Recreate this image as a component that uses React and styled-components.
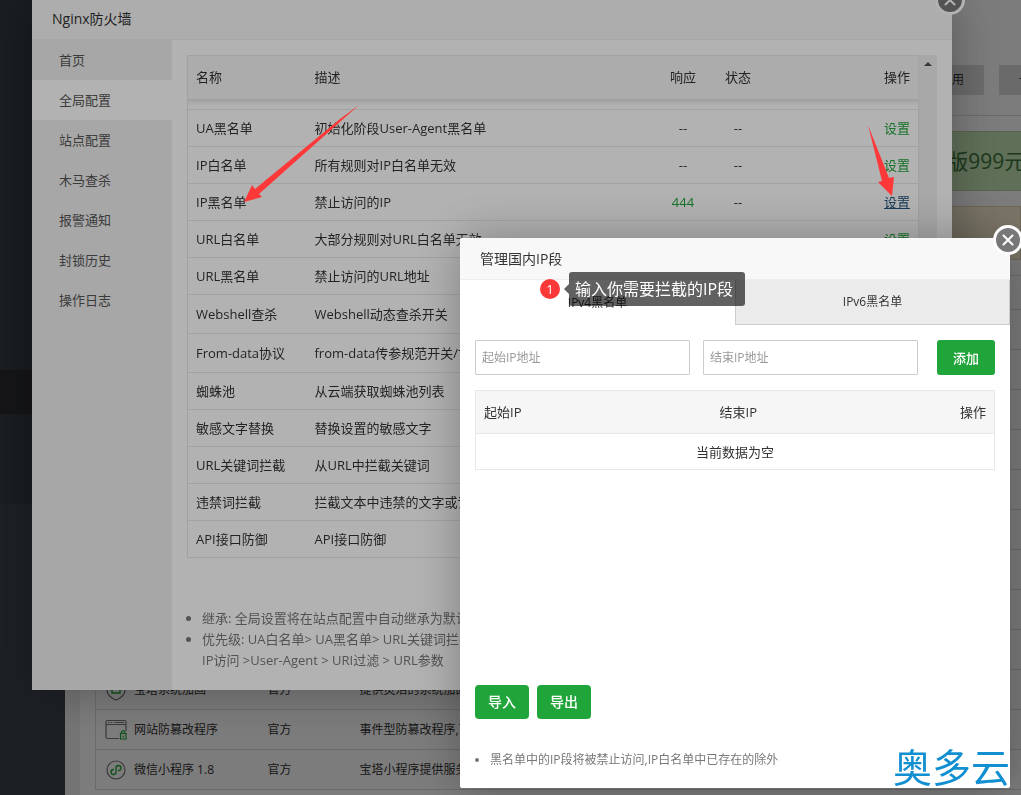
import React from 'react';
import styled, { createGlobalStyle, css } from 'styled-components';

const menu = ['首页', '全局配置', '站点配置', '木马查杀', '报警通知', '封锁历史', '操作日志'];

const rules = [
	{ name: 'UA黑名单', desc: '初始化阶段User-Agent黑名单', code: '--' },
	{ name: 'IP白名单', desc: '所有规则对IP白名单无效', code: '--' },
	{ name: 'IP黑名单', desc: '禁止访问的IP', code: '444', hovered: true },
	{ name: 'URL白名单', desc: '大部分规则对URL白名单无效', code: '--' },
	{ name: 'URL黑名单', desc: '禁止访问的URL地址', code: '444' },
	{ name: 'Webshell查杀', desc: 'Webshell动态查杀开关', code: '--', tall: true },
	{ name: 'From-data协议', desc: 'from-data传参规范开关/协议', code: '--', tall: true },
	{ name: '蜘蛛池', desc: '从云端获取蜘蛛池列表', code: '--' },
	{ name: '敏感文字替换', desc: '替换设置的敏感文字', code: '--' },
	{ name: 'URL关键词拦截', desc: '从URL中拦截关键词', code: '444' },
	{ name: '违禁词拦截', desc: '拦截文本中违禁的文字或词语', code: '444' },
	{ name: 'API接口防御', desc: 'API接口防御', code: '444' }
];

const ShieldIcon = () => (
	<svg width="22" height="22" viewBox="0 0 22 22" fill="none">
		<path d="M11 1C8 3 5 4 2 4v7c0 5 4 8 9 10 5-2 9-5 9-10V4c-3 0-6-1-9-3z" stroke="#777" strokeWidth="1.3" />
		<path d="M7 8h8v6H7z" stroke="#20a53a" strokeWidth="1.5" />
	</svg>
);

const TamperIcon = () => (
	<svg width="22" height="22" viewBox="0 0 22 22" fill="none">
		<path
			d="M14 19.500H2.500A1.500 1.500 0 0 1 1 18V3a1.500 1.500 0 0 1 1.500-1.500h17A1.500 1.500 0 0 1 21 3v9M1 5.500h20"
			stroke="#777"
			strokeWidth="1.2"
		/>
		<path d="M3 3.500h6" stroke="#777" strokeDasharray="1.5 1" />
		<path d="M10 3.500h9" stroke="#777" />
		<path
			d="M15.500 14.500h5.500V20h-5.500zM16.500 14.500v-1a1.700 1.700 0 0 1 3.400 0v1M18.200 16.500v2"
			stroke="#20a53a"
			strokeWidth="1.2"
		/>
	</svg>
);

const MiniAppIcon = () => (
	<svg width="22" height="22" viewBox="0 0 22 22" fill="none">
		<circle cx="11" cy="11" r="9" stroke="#777" strokeWidth="1.2" />
		<path
			d="M8.500 10.500C6.800 10.500 6 11.600 6 13s1 2.500 2.500 2.500S11 14.500 11 13V9c0-1.500 1-2.500 2.500-2.500S16 7.600 16 9s-.8 2.500-2.500 2.500"
			stroke="#20a53a"
			strokeWidth="1.3"
			strokeLinecap="round"
		/>
	</svg>
);

const plugins = [
	{ name: '宝塔系统加固', desc: '提供灵活的系统加固功能', icon: <ShieldIcon /> },
	{ name: '网站防篡改程序', desc: '事件型防篡改程序,可有效保护网站', icon: <TamperIcon /> },
	{ name: '微信小程序 1.8', desc: '宝塔小程序提供服务器信息', icon: <MiniAppIcon /> }
];

const blankRows = Array.from({ length: 9 }, (_, i) => i);

const Close = () => (
	<CloseButton type="button" aria-label="关闭">
		<svg width="12" height="12" viewBox="0 0 12 12">
			<path d="M1.500 1.500l9 9M10.500 1.500l-9 9" stroke="#fff" strokeWidth="2" strokeLinecap="round" />
		</svg>
	</CloseButton>
);

const SoftwarePage = () => (
	<Page>
		<SideNav>
			<NavGroup />
			<NavCurrent />
			<NavRest />
		</SideNav>
		<Panel>
			<Toolbar>
				<TypeButton type="button">第三方应用</TypeButton>
				<TypeButton type="button">一键部署</TypeButton>
			</Toolbar>
			<Banner>企业版999元/年</Banner>
			<GoldBanner />
			<PluginTable>
				<colgroup>
					<col width="164" />
					<col width="92" />
					<col />
				</colgroup>
				<tbody>
					<PluginRow $head>
						<td colSpan="3" />
					</PluginRow>
					{blankRows.map(i => (
						<PluginRow key={i}>
							<td colSpan="3" />
						</PluginRow>
					))}
					{plugins.map(p => (
						<PluginRow key={p.name}>
							<td>
								<PluginName>
									{p.icon}
									{p.name}
								</PluginName>
							</td>
							<td>官方</td>
							<td>{p.desc}</td>
						</PluginRow>
					))}
				</tbody>
			</PluginTable>
		</Panel>
	</Page>
);

const Firewall = () => (
	<FirewallDialog role="dialog" aria-label="Nginx防火墙">
		<DialogTitle>Nginx防火墙</DialogTitle>
		<Close />
		<FirewallBody>
			<Menu>
				{menu.map(item => (
					<MenuItem key={item} type="button" $active={item === '全局配置'}>
						{item}
					</MenuItem>
				))}
			</Menu>
			<Content>
				<Scroller>
					<RuleTable>
						<colgroup>
							<col width="119" />
							<col />
							<col width="55" />
							<col width="55" />
							<col width="153" />
						</colgroup>
						<thead>
							<tr>
								<th>名称</th>
								<th>描述</th>
								<Center as="th">响应</Center>
								<Center as="th">状态</Center>
								<Right as="th">操作</Right>
							</tr>
						</thead>
						<tbody>
							<ScrolledRow>
								<td colSpan="5" />
							</ScrolledRow>
							{rules.map(r => (
								<RuleRow key={r.name} $tall={r.tall}>
									<td>{r.name}</td>
									<td>{r.desc}</td>
									<Center>{r.code === '--' ? r.code : <Code>{r.code}</Code>}</Center>
									<Center>--</Center>
									<Right>
										<SetLink href="#" $hovered={r.hovered}>
											设置
										</SetLink>
									</Right>
								</RuleRow>
							))}
						</tbody>
					</RuleTable>
					<ScrollTrack>
						<svg width="8" height="4" viewBox="0 0 8 4">
							<path d="M0 4L4 0l4 4z" fill="#505050" />
						</svg>
					</ScrollTrack>
				</Scroller>
				<Tips>
					<li>继承: 全局设置将在站点配置中自动继承为默认值</li>
					<li>
						优先级: UA白名单&gt; UA黑名单&gt; URL关键词拦截&gt;
						<br />
						IP访问 &gt;User-Agent &gt; URI过滤 &gt; URL参数
					</li>
				</Tips>
			</Content>
		</FirewallBody>
	</FirewallDialog>
);

const IpManager = () => (
	<IpDialog role="dialog" aria-label="管理国内IP段">
		<DialogTitle>管理国内IP段</DialogTitle>
		<Close />
		<Tabs>
			<Tab type="button" $active>
				IPv4黑名单
			</Tab>
			<Tab type="button">IPv6黑名单</Tab>
		</Tabs>
		<IpBody>
			<IpForm>
				<HiddenLabel htmlFor="startIp">起始IP地址</HiddenLabel>
				<IpInput id="startIp" placeholder="起始IP地址" />
				<HiddenLabel htmlFor="endIp">结束IP地址</HiddenLabel>
				<IpInput id="endIp" placeholder="结束IP地址" />
				<AddButton type="button">添加</AddButton>
			</IpForm>
			<IpTable>
				<thead>
					<tr>
						<th>起始IP</th>
						<th>结束IP</th>
						<Right as="th">操作</Right>
					</tr>
				</thead>
				<tbody>
					<tr>
						<Center colSpan="3">当前数据为空</Center>
					</tr>
				</tbody>
			</IpTable>
			<Actions>
				<GreenButton type="button">导入</GreenButton>
				<GreenButton type="button">导出</GreenButton>
			</Actions>
			<SmallTips>
				<li>黑名单中的IP段将被禁止访问,IP白名单中已存在的除外</li>
			</SmallTips>
		</IpBody>
		<Callout>
			<Step>1</Step>
			<Bubble>输入你需要拦截的IP段</Bubble>
		</Callout>
		<Watermark>奥多云</Watermark>
	</IpDialog>
);

const App = () => (
	<>
		<GlobalStyle />
		<SoftwarePage />
		<Shade />
		<Firewall />
		<Shade />
		<IpManager />
		<Arrows width="1021" height="240" viewBox="0 0 1021 240" fill="#fd3838">
			<path d="M244 202l8-17 3 4 85-70 19-14-18 16-82 73 3 3z" />
			<path d="M868 125l21 53 5-1-2 19-14-14 4-1z" />
		</Arrows>
	</>
);

export default App;

const GlobalStyle = createGlobalStyle`
	* {
		box-sizing: border-box;
	}

	body {
		margin: 0;
		overflow: hidden;
		color: #333;
		font-family: 'Open Sans', 'Noto Sans CJK SC', sans-serif;
		font-size: 12px;
		line-height: 18px;
	}

	button,
	input {
		margin: 0;
		font-family: inherit;
		line-height: inherit;
	}
`;

const Page = styled.div`
	display: flex;
	height: 100vh;
	overflow: hidden;
	background-color: #f0f0f0;
`;

const SideNav = styled.div`
	display: flex;
	flex-direction: column;
	flex-shrink: 0;
	width: 65px;
	background-color: #3c444d;
`;

const NavGroup = styled.div`
	height: 370px;
	background-color: #353d44;
`;

const NavCurrent = styled.div`
	height: 44px;
	background-color: #2c2d32;
`;

const NavRest = styled.div`
	height: 90px;
	background-color: #353d44;
`;

const Panel = styled.div`
	flex: 1;
	min-width: 0;
	margin-left: 15px;
	padding: 65px 0 0 15px;
	background-color: white;
`;

const Toolbar = styled.div`
	display: flex;
	justify-content: flex-end;
	gap: 15px;
	height: 51px;
	margin-bottom: 15px;
	border-bottom: 1px solid #ddd;

	button:last-child {
		margin-right: -66px;
	}
`;

const TypeButton = styled.button`
	flex-shrink: 0;
	height: 30px;
	padding: 0 20px;
	border: 0;
	background-color: #dcdcdc;
	color: #333;
	font-size: 12px;
`;

const Banner = styled.div`
	display: flex;
	justify-content: flex-end;
	align-items: center;
	height: 60px;
	margin: 0 -34px 15px 0;
	border: 1px solid #b5cfa8;
	background-color: #c6e6b6;
	color: #3c763d;
	font-size: 21px;
	white-space: nowrap;
`;

const GoldBanner = styled.div`
	height: 54px;
	margin-bottom: 15px;
	border: 1px solid #e0d5b5;
	background-color: #fbf0d3;
`;

const PluginTable = styled.table`
	width: 100%;
	border-collapse: collapse;
	table-layout: fixed;
	border-left: 1px solid #ddd;
`;

const PluginRow = styled.tr`
	height: ${props => (props.$head ? '34px' : '40px')};
	border-top: 1px solid #ddd;
	border-bottom: 1px solid #ddd;

	td {
		padding: 0 8px;
		white-space: nowrap;
	}
`;

const PluginName = styled.div`
	display: flex;
	align-items: center;
	gap: 7px;
	padding-left: 1px;
`;

const Shade = styled.div`
	position: fixed;
	inset: 0;
	background-color: rgba(0, 0, 0, 0.3);
`;

const Dialog = styled.div`
	position: fixed;
	display: flex;
	flex-direction: column;
	border-radius: 2px;
	background-color: white;
	box-shadow: 1px 1px 50px rgba(0, 0, 0, 0.3);
`;

const FirewallDialog = styled(Dialog)`
	top: -2px;
	left: 32px;
	width: 920px;
	height: 692px;
`;

const IpDialog = styled(Dialog)`
	top: 238px;
	left: 460px;
	width: 550px;
	height: 550px;
`;

const DialogTitle = styled.div`
	flex-shrink: 0;
	height: 42px;
	padding: 0 80px 0 20px;
	border-bottom: 1px solid #eee;
	border-radius: 2px 2px 0 0;
	background-color: #f8f8f8;
	font-size: 14px;
	line-height: 42px;
`;

const CloseButton = styled.button`
	position: absolute;
	top: -13px;
	right: -13px;
	display: flex;
	align-items: center;
	justify-content: center;
	width: 30px;
	height: 30px;
	padding: 0;
	border: 3px solid white;
	border-radius: 50%;
	background-color: #787878;
	cursor: pointer;
`;

const FirewallBody = styled.div`
	display: flex;
	flex: 1;
	min-height: 0;
`;

const Menu = styled.div`
	display: flex;
	flex-direction: column;
	flex-shrink: 0;
	width: 140px;
	background-color: #f0f0f0;
`;

const MenuItem = styled.button`
	height: 40px;
	padding: 0 0 0 27px;
	border: 0;
	background-color: ${props => (props.$active ? 'white' : 'transparent')};
	color: #555;
	font-size: 13px;
	text-align: left;
	cursor: pointer;
`;

const Content = styled.div`
	flex: 1;
	min-width: 0;
	padding: 15px;
`;

const Scroller = styled.div`
	display: flex;
	height: 504px;
	overflow: hidden;
	font-size: 13px;
`;

const RuleTable = styled.table`
	flex: 1;
	width: 100%;
	height: 503px;
	border-collapse: collapse;
	table-layout: fixed;
	border: 1px solid #e8e8e8;

	th {
		height: 43px;
		padding: 0 8px;
		background-color: #f6f6f6;
		font-weight: normal;
		text-align: left;
	}

	td {
		padding: 0 8px;
		white-space: nowrap;
	}
`;

const ScrolledRow = styled.tr`
	height: 11px;
	background: linear-gradient(#e4e4e4, white 60%);
`;

const RuleRow = styled.tr`
	height: ${props => (props.$tall ? '39px' : '37px')};
	border-top: 1px solid #e8e8e8;
`;

const Center = styled.td`
	&& {
		text-align: center;
	}
`;

const Right = styled.td`
	&& {
		text-align: right;
	}
`;

const Code = styled.span`
	color: #20a53a;
	font-weight: 500;
`;

const SetLink = styled.a`
	color: #20a53a;
	text-decoration: none;

	${props =>
		props.$hovered &&
		css`
			color: #23527c;
			text-decoration: underline;
		`};
`;

const ScrollTrack = styled.div`
	display: flex;
	justify-content: center;
	flex-shrink: 0;
	width: 18px;
	padding-top: 7px;
	background-color: #f1f1f1;
`;

const Tips = styled.ul`
	margin: 49px 0 0;
	padding-left: 15px;
	color: #777;
	font-size: 13px;
	line-height: 21px;
	white-space: nowrap;
`;

const Tabs = styled.div`
	display: flex;
	height: 45px;
`;

const Tab = styled.button`
	width: 50%;
	padding: 0;
	border: 0;
	background-color: white;
	color: #333;
	font-size: 12px;
	cursor: pointer;

	${props =>
		!props.$active &&
		css`
			border: solid #ccc;
			border-width: 0 1px 1px;
			background-color: #ebebeb;
		`};
`;

const IpBody = styled.div`
	display: flex;
	flex: 1;
	flex-direction: column;
	padding: 15px;
`;

const IpForm = styled.form`
	display: flex;
	margin-bottom: 15px;
`;

const HiddenLabel = styled.label`
	position: absolute;
	width: 1px;
	height: 1px;
	overflow: hidden;
	clip-path: inset(50%);
`;

const IpInput = styled.input`
	flex: 1;
	min-width: 0;
	height: 35px;
	margin-right: 13px;
	padding: 0 6px;
	border: 1px solid #ccc;
	border-radius: 1px;
	font-size: 12px;

	&::placeholder {
		color: #999;
	}
`;

const GreenButton = styled.button`
	width: 54px;
	height: 34px;
	padding: 0;
	border: 0;
	border-radius: 4px;
	background-color: #20a53a;
	color: white;
	font-size: 14px;
	font-weight: 500;
	cursor: pointer;
`;

const AddButton = styled(GreenButton)`
	width: 58px;
	height: 35px;
	margin-left: 6px;
	border-radius: 3px;
	font-size: 13px;
`;

const IpTable = styled.table`
	width: 100%;
	border-collapse: collapse;
	table-layout: fixed;
	border: 1px solid #e8e8e8;
	font-size: 13px;

	th {
		height: 43px;
		padding: 0 8px;
		border-bottom: 1px solid #e8e8e8;
		background-color: #f6f6f6;
		font-weight: normal;
		text-align: left;
	}

	th:not(:last-child) {
		width: 236px;
	}

	td {
		height: 36px;
		padding: 0 8px;
	}
`;

const Actions = styled.div`
	display: flex;
	gap: 8px;
	margin-top: auto;
`;

const SmallTips = styled.ul`
	margin: 30px 0 3px;
	padding-left: 15px;
	color: #777;
	font-size: 12px;
	line-height: 21px;
`;

const Callout = styled.div`
	position: absolute;
	top: 34px;
	left: 80px;
	display: flex;
	align-items: center;
	gap: 9px;
`;

const Step = styled.span`
	width: 20px;
	border-radius: 50%;
	background-color: #fd3838;
	color: white;
	font-size: 13px;
	line-height: 20px;
	text-align: center;
`;

const Bubble = styled.div`
	position: relative;
	height: 34px;
	padding: 0 12px 0 6px;
	border-radius: 3px;
	background-color: rgba(0, 0, 0, 0.62);
	color: white;
	font-size: 16px;
	line-height: 34px;
	white-space: nowrap;

	&::before {
		content: '';
		position: absolute;
		top: 12px;
		left: -5px;
		border: solid transparent;
		border-width: 5px 5px 5px 0;
		border-right-color: rgba(0, 0, 0, 0.62);
	}
`;

const Watermark = styled.div`
	position: absolute;
	right: 0;
	bottom: 0;
	color: #128fd0;
	font-size: 39px;
	line-height: 42px;
`;

const Arrows = styled.svg`
	position: fixed;
	top: 0;
	left: 0;
	pointer-events: none;
`;
